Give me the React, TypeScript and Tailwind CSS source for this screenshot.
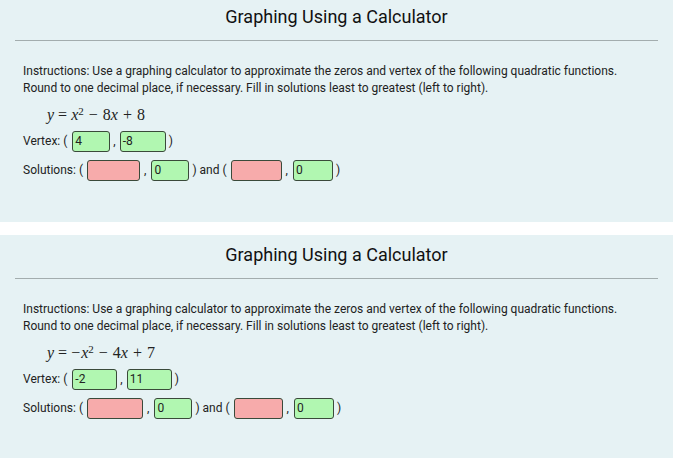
import React from "react";

function Box({ w, color, value }: { w: string; color: "g" | "r"; value?: string }) {
  const bg = color === "g" ? "bg-[#b1f7b1]" : "bg-[#f7abab]";
  return (
    <span
      className={`inline-flex items-center h-[21px] ${w} ${bg} border border-[#3a4a3a] rounded-[3px] pl-[2px] text-[12px] text-[#222]`}
    >
      {value}
    </span>
  );
}

const serif = { fontFamily: '"Liberation Serif", "DejaVu Serif", serif', fontSize: 16 };

function Eq({ neg, b, c }: { neg: boolean; b: string; c: string }) {
  return (
    <div className="ml-[24px] mt-[6px] h-[22px] flex items-center text-[#222]">
      <span className="italic" style={serif}>y</span>
      <span className="mx-[4px]" style={serif}>=</span>
      {neg && <span className="mr-[1px]" style={serif}>−</span>}
      <span className="italic" style={serif}>x</span>
      <sup className="text-[11px] relative -top-[3px]" style={{ fontFamily: '"Liberation Serif", serif' }}>2</sup>
      <span className="mx-[5px]" style={serif}>−</span>
      <span style={serif}>{b}</span>
      <span className="italic" style={serif}>x</span>
      <span className="mx-[5px]" style={serif}>+</span>
      <span style={serif}>{c}</span>
    </div>
  );
}

type PanelProps = {
  top: string;
  neg: boolean;
  b: string;
  c: string;
  v1w: string;
  v1: string;
  v2w: string;
  v2: string;
  s: [string, string, string, string];
};

function Panel({ top, neg, b, c, v1w, v1, v2w, v2, s }: PanelProps) {
  return (
    <div className={`bg-[#e6f2f4] px-[15px] overflow-hidden ${top}`}>
      <h2 className="text-center text-[18px] leading-[22px] text-[#111]">Graphing Using a Calculator</h2>
      <div className="mt-[12px] h-px bg-[#a3adae]" />
      <div className="px-[8px] text-[12px] leading-[17px] text-[#222]">
        <p className="mt-[22px]">
          Instructions: Use a graphing calculator to approximate the zeros and vertex of the following quadratic functions.
          <br />
          Round to one decimal place, if necessary. Fill in solutions least to greatest (left to right).
        </p>
        <Eq neg={neg} b={b} c={c} />
        <div className="mt-[6px] flex items-center h-[21px]">
          <span>Vertex: (</span>
          <span className="ml-[5px]" />
          <Box w={v1w} color="g" value={v1} />
          <span className="ml-[3px] mr-[4px]">,</span>
          <Box w={v2w} color="g" value={v2} />
          <span className="ml-[3px]">)</span>
        </div>
        <div className="mt-[8px] flex items-center h-[21px]">
          <span>Solutions: (</span>
          <span className="ml-[4px]" />
          <Box w={s[0]} color="r" />
          <span className="ml-[4px] mr-[5px]">,</span>
          <Box w={s[1]} color="g" value="0" />
          <span className="ml-[3px]">) and (</span>
          <span className="ml-[4px]" />
          <Box w={s[2]} color="r" />
          <span className="ml-[4px] mr-[5px]">,</span>
          <Box w={s[3]} color="g" value="0" />
          <span className="ml-[3px]">)</span>
        </div>
      </div>
    </div>
  );
}

export default function App() {
  return (
    <div className="bg-white w-[673px] h-[458px] overflow-hidden" style={{ fontFamily: 'Roboto, "Liberation Sans", sans-serif' }}>
      <Panel
        top="pt-[6px] h-[222px]"
        neg={false}
        b="8"
        c="8"
        v1w="w-[38px]"
        v1="4"
        v2w="w-[46px]"
        v2="-8"
        s={["w-[53px]", "w-[38px]", "w-[51px]", "w-[40px]"]}
      />
      <div className="h-[13px]" />
      <Panel
        top="pt-[9px] h-[223px]"
        neg={true}
        b="4"
        c="7"
        v1w="w-[45px]"
        v1="-2"
        v2w="w-[45px]"
        v2="11"
        s={["w-[56px]", "w-[38px]", "w-[49px]", "w-[40px]"]}
      />
    </div>
  );
}
